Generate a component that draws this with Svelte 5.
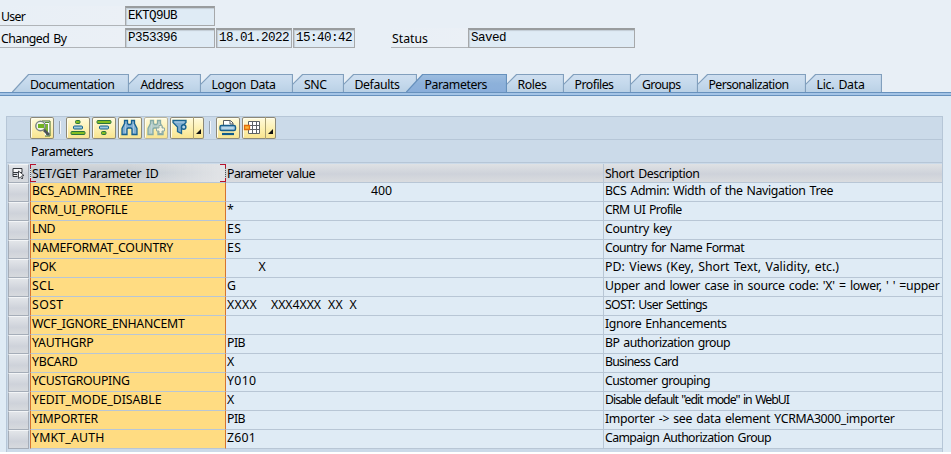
<script>
  const tabs = [
    { label: 'Documentation', left: 12, right: 128, tx: 30, tw: 84.5 },
    { label: 'Address', left: 129, right: 200, tx: 140.5, tw: 43 },
    { label: 'Logon Data', left: 201, right: 292, tx: 211.5, tw: 64 },
    { label: 'SNC', left: 293, right: 343, tx: 304, tw: 22.5 },
    { label: 'Defaults', left: 344, right: 416, tx: 354.5, tw: 45 },
    { label: 'Parameters', left: 406, right: 506, tx: 424.5, tw: 62.5, active: true },
    { label: 'Roles', left: 507, right: 563, tx: 517.5, tw: 29 },
    { label: 'Profiles', left: 564, right: 630, tx: 574.5, tw: 39 },
    { label: 'Groups', left: 631, right: 697, tx: 642, tw: 38.5 },
    { label: 'Personalization', left: 698, right: 805, tx: 708.5, tw: 80 },
    { label: 'Lic. Data', left: 806, right: 881, tx: 816.5, tw: 48 }
  ];
  const gap = (i) => tabs[i].left - (i ? tabs[i - 1].right + 1 : 0);
  const outline = (t, i) => {
    const w = t.right - t.left + 0.5;
    if (i === 0 || t.active) return `M0 18.5 L16.5 .5 H${w} V18.5`;
    return `M-.5 10.5 L9.5 .5 H${w} V18.5`;
  };
  const body = (t, i) => outline(t, i) + (i === 0 || t.active ? 'Z' : ' H0 V10Z');

  const rows = [
    ['BCS_ADMIN_TREE', 101, [['400', 144, 21]], 'BCS Admin: Width of the Navigation Tree', 228],
    ['CRM_UI_PROFILE', 95.5, [['*', 0, 7]], 'CRM UI Profile', 76.5],
    ['LND', 23, [['ES', 0, 14.5]], 'Country key', 66.5],
    ['NAMEFORMAT_COUNTRY', 141, [['ES', 0, 14.5]], 'Country for Name Format', 139],
    ['POK', 24, [['X', 31.5, 7.5]], 'PD: Views (Key, Short Text, Validity, etc.)', 234],
    ['SCL', 22, [['G', 0, 8.5]], "Upper and lower case in source code: 'X' = lower, ' ' =upper", 334.5],
    ['SOST', 31.5, [['XXXX', 0, 30], ['XXX4XXX', 14, 50], ['XX', 7, 15], ['X', 6.5, 7.5]], 'SOST: User Settings', 102],
    ['WCF_IGNORE_ENHANCEMT', 152.5, [], 'Ignore Enhancements', 121.5],
    ['YAUTHGRP', 61.5, [['PIB', 0, 18]], 'BP authorization group', 125],
    ['YBCARD', 45.5, [['X', 0, 7.5]], 'Business Card', 73],
    ['YCUSTGROUPING', 97.5, [['Y010', 0, 29.5]], 'Customer grouping', 105],
    ['YEDIT_MODE_DISABLE', 129.5, [['X', 0, 7.5]], 'Disable default "edit mode" in WebUI', 184],
    ['YIMPORTER', 66, [['PIB', 0, 18]], 'Importer -> see data element YCRMA3000_importer', 289.5],
    ['YMKT_AUTH', 72.5, [['Z601', 0, 29]], 'Campaign Authorization Group', 166]
  ];

  // Spreads the letters of a label over its designed width.
  function fit(node, width) {
    const natural = node.getBoundingClientRect().width;
    node.style.letterSpacing = (width - natural) / node.textContent.length + 'px';
  }
</script>

<div class="screen">
  <div class="form">
    <div class="line">
      <div class="label"><span use:fit={24}>User</span></div>
      <div class="field w90">EKTQ9UB</div>
    </div>
    <div class="line">
      <div class="label"><span use:fit={65.5}>Changed By</span></div>
      <div class="field w90">P353396</div>
      <div class="field date">18.01.2022</div>
      <div class="field time">15:40:42</div>
      <div class="label status"><span use:fit={36}>Status</span></div>
      <div class="field saved">Saved</div>
    </div>
  </div>

  <div class="tabs">
    {#each tabs as t, i}
      <div class="tab" class:active={t.active} style:width="{t.right - t.left + 1}px" style:margin-left="{gap(i)}px" style:padding-left="{t.tx - t.left}px">
        <svg class="shape" width={t.right - t.left + 1} height="18">
          <defs>
            <linearGradient id="tab{i}" x1="0" y1="0" x2="0" y2="1">
              <stop offset="0" stop-color={t.active ? '#9dbde0' : '#cfdff0'} />
              <stop offset=".5" stop-color={t.active ? '#8db1da' : '#c5d9ec'} />
              <stop offset="1" stop-color={t.active ? '#8aaeda' : '#b9d0e5'} />
            </linearGradient>
          </defs>
          <path d={body(t, i)} fill="url(#tab{i})" />
          <path d={outline(t, i)} fill="none" stroke={t.active ? '#6791bd' : '#819fbd'} stroke-width="1.2" />
        </svg>
        <span use:fit={t.tw}>{t.label}</span>
      </div>
    {/each}
  </div>
  <div class="rail"></div>

  <div class="panel">
    <div class="toolbar">
      <div class="btn"><svg width="24" height="22"><path d="M12 4h8v15h-5" fill="#fff" stroke="#3e6b2c" /><path d="M13 7h5v8h-4z" fill="#79b52e" /><path d="M15 5.5h4M16 17.5h3" stroke="#5b9330" /><circle cx="10.5" cy="9" r="4.7" fill="#f5f8e9" stroke="#7a8587" stroke-width="1.5" /><path d="M8 7h6v4H8z" fill="#70b222" /><path d="M14 13l5 5" stroke="#4c5358" stroke-width="2.8" /></svg></div>
      <i class="sep"></i>
      <div class="btn"><svg width="24" height="22"><rect x="9.5" y="3.5" width="4.5" height="3" rx="1" fill="#83be20" stroke="#287340" /><rect x="7.5" y="9" width="9" height="3" rx="1" fill="#9cc7de" stroke="#11608d" /><rect x="5" y="14.5" width="14" height="3" rx="1" fill="#83be20" stroke="#287340" /></svg></div>
      <div class="btn"><svg width="24" height="22"><rect x="5" y="3.5" width="14" height="3" rx="1" fill="#83be20" stroke="#287340" /><rect x="7.5" y="9" width="9" height="3" rx="1" fill="#9cc7de" stroke="#11608d" /><rect x="9.5" y="14.5" width="4.5" height="3" rx="1" fill="#83be20" stroke="#287340" /></svg></div>
      <div class="btn">{@render binoculars('#82afd3', '#17608f')}</div>
      <div class="btn dim">{@render binoculars('#b9cfc8', '#84aaa6')}<svg class="over" width="24" height="22"><path d="M15 8.5h3v2.5h2.5v3H18v2.5h-3V14h-2.5v-3H15z" fill="#f6f4dc" stroke="#92aca5" /></svg></div>
      <div class="btn split">
        <svg width="23" height="22"><path d="M3 3.5H16v2L11.5 10v6.5l-4-2V10L3 5.5z" fill="#7eacd0" stroke="#1b6592" stroke-width="1.3" /><path d="M4.5 5h10" stroke="#b2d0e5" /><circle cx="13.7" cy="10" r="2.2" fill="#b7d4e8" stroke="#17608f" stroke-width="1.4" /></svg>
        <svg class="drop" width="11" height="22"><path d="M7 12v5H2z" fill="#111" /></svg>
      </div>
      <i class="sep"></i>
      <div class="btn"><svg width="24" height="22"><path d="M7.5 9V3.500h7l2.500 2.500v3" fill="#fff" stroke="#555b60" /><path d="M14 4v3h3" fill="none" stroke="#555b60" /><rect x="4" y="8.500" width="15.500" height="5" rx="1.500" fill="#9ac2df" stroke="#165d8c" stroke-width="1.400" /><path d="M6 11h11.500" stroke="#d6e9f4" /><path d="M6 17h12" stroke="#0f5b8b" stroke-width="2.200" /></svg></div>
      <div class="btn split">
        <svg width="23" height="22"><path d="M6.500 4.500h11v12h-11zM6.500 8.500h11M6.500 12.500h11M10.500 4.500v12M14.500 4.500v12" fill="#fff" stroke="#5b6165" /><path d="M2.500 8.500h5v4h-5z" fill="#fbb635" stroke="#e16b0c" stroke-width="1.300" /></svg>
        <svg class="drop" width="11" height="22"><path d="M7 12v5H2z" fill="#111" /></svg>
      </div>
    </div>
    <div class="title"><span use:fit={62}>Parameters</span></div>

    <div class="table">
      <div class="row head">
        <div class="sel"><svg width="19" height="17"><path d="M4 3.500h9v4H4zM8.500 11.500H4v-4" fill="#f4f5f7" stroke="#33363c" /><path d="M4 9.500h4" stroke="#33363c" /><path d="M9.500 6v7.500l2-1.500 1.500 2 1-1-1.500-2 2.500-.5z" fill="#fff" stroke="#33363c" stroke-width=".9" /></svg></div>
        <div class="id"><span use:fit={126.5}>SET/GET Parameter ID</span><b class="mark l"></b><b class="mark r"></b></div>
        <div class="val"><span use:fit={88}>Parameter value</span></div>
        <div class="desc"><span use:fit={94.5}>Short Description</span></div>
      </div>
      {#each rows as [id, iw, vals, desc, dw]}
        <div class="row">
          <div class="sel"></div>
          <div class="id"><span use:fit={iw}>{id}</span></div>
          <div class="val">{#each vals as [v, off, vw]}<span style:margin-left="{off}px" use:fit={vw}>{v}</span>{/each}</div>
          <div class="desc"><span use:fit={dw}>{desc}</span></div>
        </div>
      {/each}
    </div>
  </div>
</div>

{#snippet binoculars(fill, line)}
  <svg width="24" height="22"><path d="M6.500 3.500h3v3l1 1h2l1-1v-3h3v3l2.500 5v6h-5v-5.500l-1-1h-3l-1 1V17.500h-5v-6l2.500-5z" fill={fill} stroke={line} stroke-width="1.300" /><path d="M7.500 7v9M15.500 7v9" stroke="#c4dbea" opacity=".6" /></svg>
{/snippet}

<style>
  :global(body) { margin: 0; background: #fff; }
  .screen { box-sizing: border-box; width: 951px; height: 452px; overflow: hidden; background: #dfebf5; font: 12.3px/18px 'Noto Sans', 'Open Sans', sans-serif; word-spacing: 1.3px; color: #000; display: flex; flex-direction: column; }
  .screen * { box-sizing: border-box; }
  span { white-space: pre; }
  svg { display: block; flex: none; }
  .form { height: 74px; padding-top: 6px; background: #e8eff6; display: flex; flex-direction: column; gap: 2px; flex: none; }
  .line { display: flex; height: 20px; }
  .label { width: 125px; height: 20px; padding: 2px 0 0 1px; border-bottom: 1px solid #b0b4b8; background: linear-gradient(90deg, #e8eff6, #ebf0f6); }
  .status { width: 77px; margin-left: 35px; }
  .field { height: 20px; border: 1px solid #a6a8aa; border-top: 2px solid #999c9e; box-shadow: inset 1px 1px 1px #c3cdd5; padding-left: 2px; background: #dfebf5; font: 12.6px/17px 'Liberation Mono', monospace; letter-spacing: -0.56px; margin-right: 1px; }
  .w90 { width: 90px; }
  .date { width: 76px; }
  .time { width: 62px; }
  .saved { width: 167px; }
  .tabs { height: 18px; background: #e8eff6; display: flex; flex: none; }
  .tab { position: relative; height: 18px; flex: none; line-height: 21px; }
  .tab span { position: relative; }
  .shape { position: absolute; left: 0; top: 0; }
  .rail { height: 4px; flex: none; border: solid #6791bd; border-width: 1px 0; background: #a4c4e6; }
  .panel { margin: 20px 0 0 6px; width: 937px; height: 337px; border: solid #b6c6d7; border-width: 1px 1px 0; background: #cbdae9; display: flex; flex-direction: column; }
  .toolbar { height: 23px; display: flex; padding-left: 23px; gap: 2px; border-bottom: 1px solid #b6c6d7; flex: none; }
  .btn { position: relative; width: 24px; height: 22px; border-radius: 2px; background: linear-gradient(#fffbe0, #fdf1b4 50%, #f8e38b); box-shadow: inset 0 0 0 1px #8c8878, inset 2px 2px 0 #fffdec; flex: none; }
  .dim { box-shadow: inset 0 0 0 1px #b6b29c, inset 2px 2px 0 #fffdec; }
  .over { position: absolute; left: 0; top: 0; }
  .split { width: 34px; display: flex; }
  .drop { border-left: 1px solid #aaa073; }
  .sep { width: 2px; height: 13px; margin: 4px 3px 0; background: #f2f5f8; border-left: 1px solid #98a3ae; flex: none; }
  .title { height: 23px; padding: 3px 0 0 24px; border-bottom: 1px solid #b6c6d7; flex: none; }
  .table { margin: 1px 0 0 1px; display: flex; flex-direction: column; }
  .row { display: flex; height: 19px; line-height: 16px; }
  .row > div { border-bottom: 1px solid #b8c6d5; background: #dfebf5; height: 19px; }
  .row > .sel { width: 21px; border: 1px solid #a5adb8; border-top-color: #f3f5f7; background: linear-gradient(#e2e5e9, #ced2da 60%, #d7dade); margin-right: 1px; }
  .row > .id { width: 196px; border-left: 1px solid #d57330; border-right: 1px solid #d57330; padding-left: 1px; background: #ffdc82; }
  .row > .val { width: 378px; border-right: 1px solid #b8c6d5; padding-left: 1px; display: flex; }
  .row > .desc { flex: 1; padding-left: 1px; }
  .head > div { background: linear-gradient(#dfe1e4, #ced2da 55%, #dadcdf); line-height: 19px; }
  .head > .sel { background: linear-gradient(#e2e5e9, #ced2da 60%, #d7dade); }
  .head > .id { position: relative; border-left: 1px dotted #555; border-right: 1px dotted #555; background: linear-gradient(90deg, transparent 50%, #e2e4e7), linear-gradient(#d4d7da, #c0c8d0 50%, #d2d5d9); }
  .mark { position: absolute; top: 0; width: 6px; height: 18px; background: linear-gradient(#b8122c, #b8122c) 0 0 / 6px 1px no-repeat, linear-gradient(#b8122c, #b8122c) 0 100% / 6px 1px no-repeat, linear-gradient(#b8122c 4px, transparent 4px 14px, #b8122c 14px) 0 0 / 1px 18px no-repeat; }
  .l { left: -1px; }
  .r { right: -1px; transform: scaleX(-1); }
</style>
